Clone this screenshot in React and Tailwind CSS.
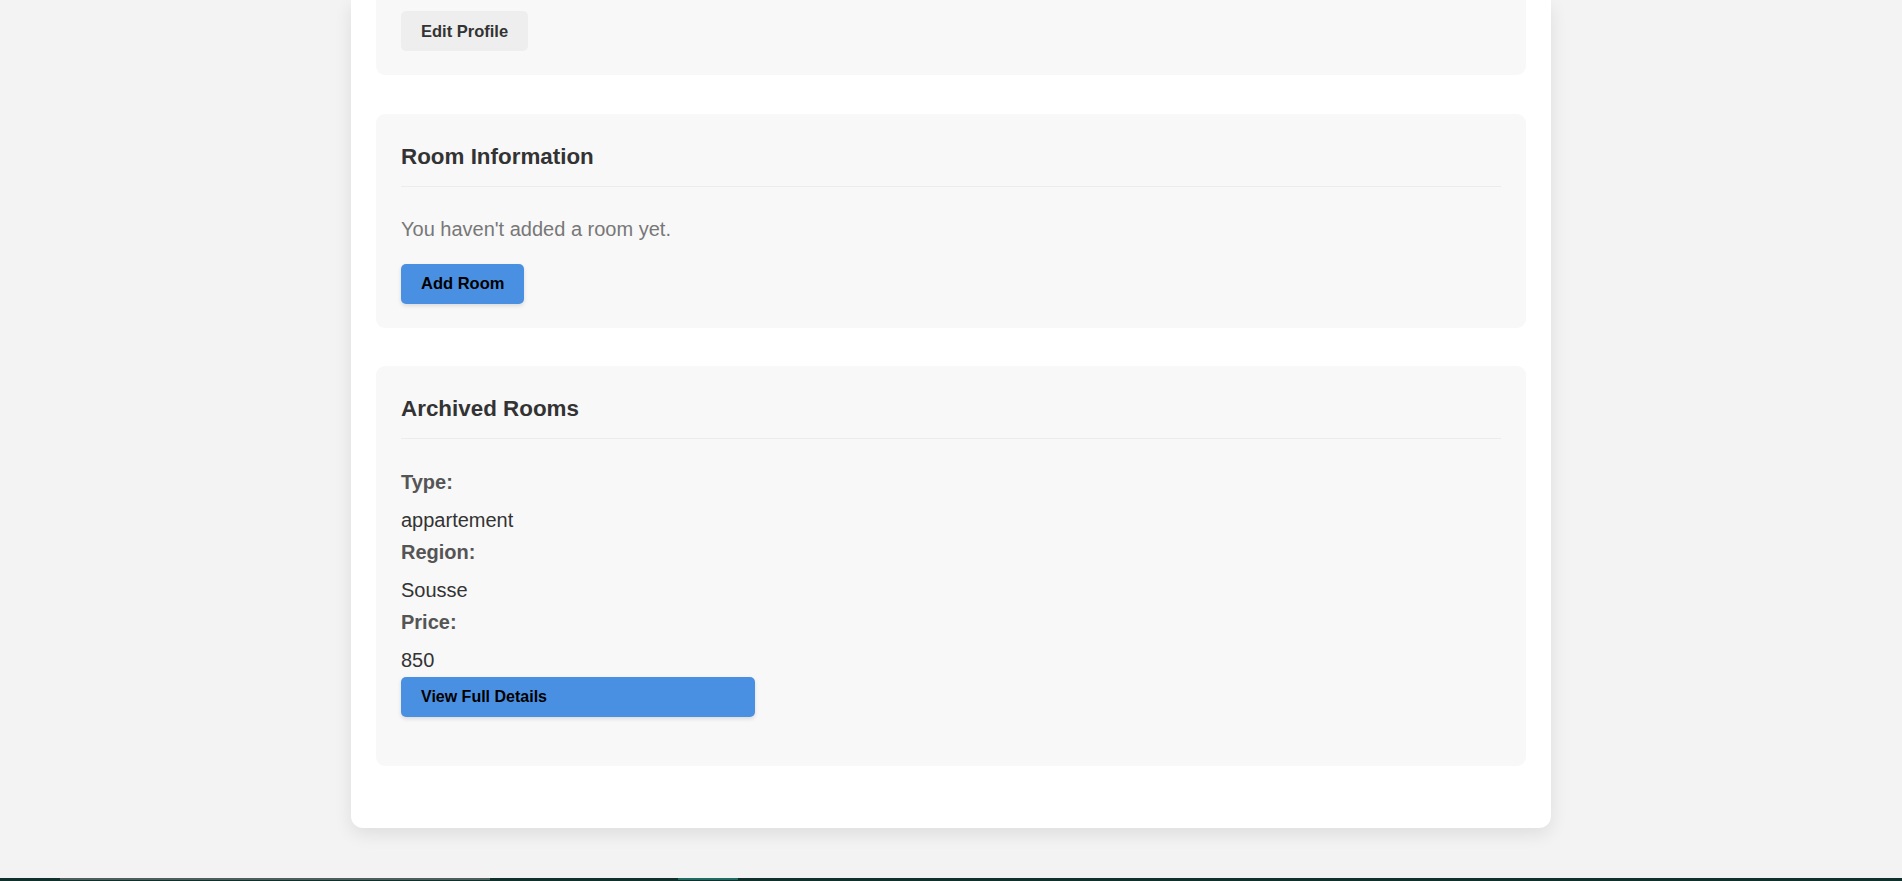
import React from "react";

const rooms = [{ type: "appartement", region: "Sousse", price: 850 }];

const SectionTitle = ({ children }) => (
  <h2 className="text-[22.4px] leading-[36px] font-bold text-[#333] pb-[11px] border-b border-[#ececec]">
    {children}
  </h2>
);

const Field = ({ label, value }) => (
  <>
    <p className="text-[20px] leading-[32px] font-bold text-[#555] mb-[6px]">{label}</p>
    <p className="text-[20px] leading-[32px] text-[#333]">{value}</p>
  </>
);

const App = () => {
  return (
    <div
      className="h-screen overflow-hidden bg-[#f3f3f3] flex flex-col"
      style={{ fontFamily: '"Liberation Sans", Arial, sans-serif' }}
    >
      <div className="pb-[50px]">
        <div className="max-w-[1200px] mx-auto bg-white rounded-b-[12px] px-[25px] pb-[25px] shadow-[0_6px_18px_rgba(0,0,0,0.09)]">
          {/* Profile (top is scrolled away) */}
          <div className="bg-[#f8f8f8] rounded-b-[9px] px-[25px] pt-[11px] pb-[24px] mb-[38.5px]">
            <button className="h-[40px] px-5 rounded-[5px] bg-[#eeeeee] text-[#333] text-[16.5px] font-bold">
              Edit Profile
            </button>
          </div>

          {/* Room Information */}
          <div className="bg-[#f8f8f8] rounded-[9px] px-[25px] pt-[25px] pb-[24px] mb-[38.5px]">
            <SectionTitle>Room Information</SectionTitle>
            <p className="mt-[26px] text-[20px] leading-[32px] text-[#777]">You haven't added a room yet.</p>
            <button className="mt-[19px] h-[40px] px-5 rounded-[5px] bg-[#4a90e2] text-black text-[16.5px] font-bold shadow-[0_2px_4px_rgba(0,0,0,0.12)]">
              Add Room
            </button>
          </div>

          {/* Archived Rooms */}
          <div className="bg-[#f8f8f8] rounded-[9px] px-[25px] pt-[25px] pb-[49px] mb-[37px]">
            <SectionTitle>Archived Rooms</SectionTitle>
            <div className="mt-[27px]">
              {rooms.map((room, i) => (
                <div key={i}>
                  <Field label="Type:" value={room.type} />
                  <Field label="Region:" value={room.region} />
                  <Field label="Price:" value={room.price} />
                  <button className="mt-px w-[354px] h-[40px] px-5 rounded-[5px] bg-[#4a90e2] text-black text-[16px] font-bold text-left shadow-[0_2px_4px_rgba(0,0,0,0.12)]">
                    View Full Details
                  </button>
                </div>
              ))}
            </div>
          </div>
        </div>
      </div>

      {/* footer edge */}
      <footer className="h-[40px] shrink-0 bg-[#10302c] flex items-start">
        <div className="ml-[60px] w-[430px] h-[2px] bg-[#4d5e5b]" />
        <div className="ml-[188px] w-[60px] h-[2px] bg-[#1f6b61]" />
      </footer>
    </div>
  );
};

export default App;
